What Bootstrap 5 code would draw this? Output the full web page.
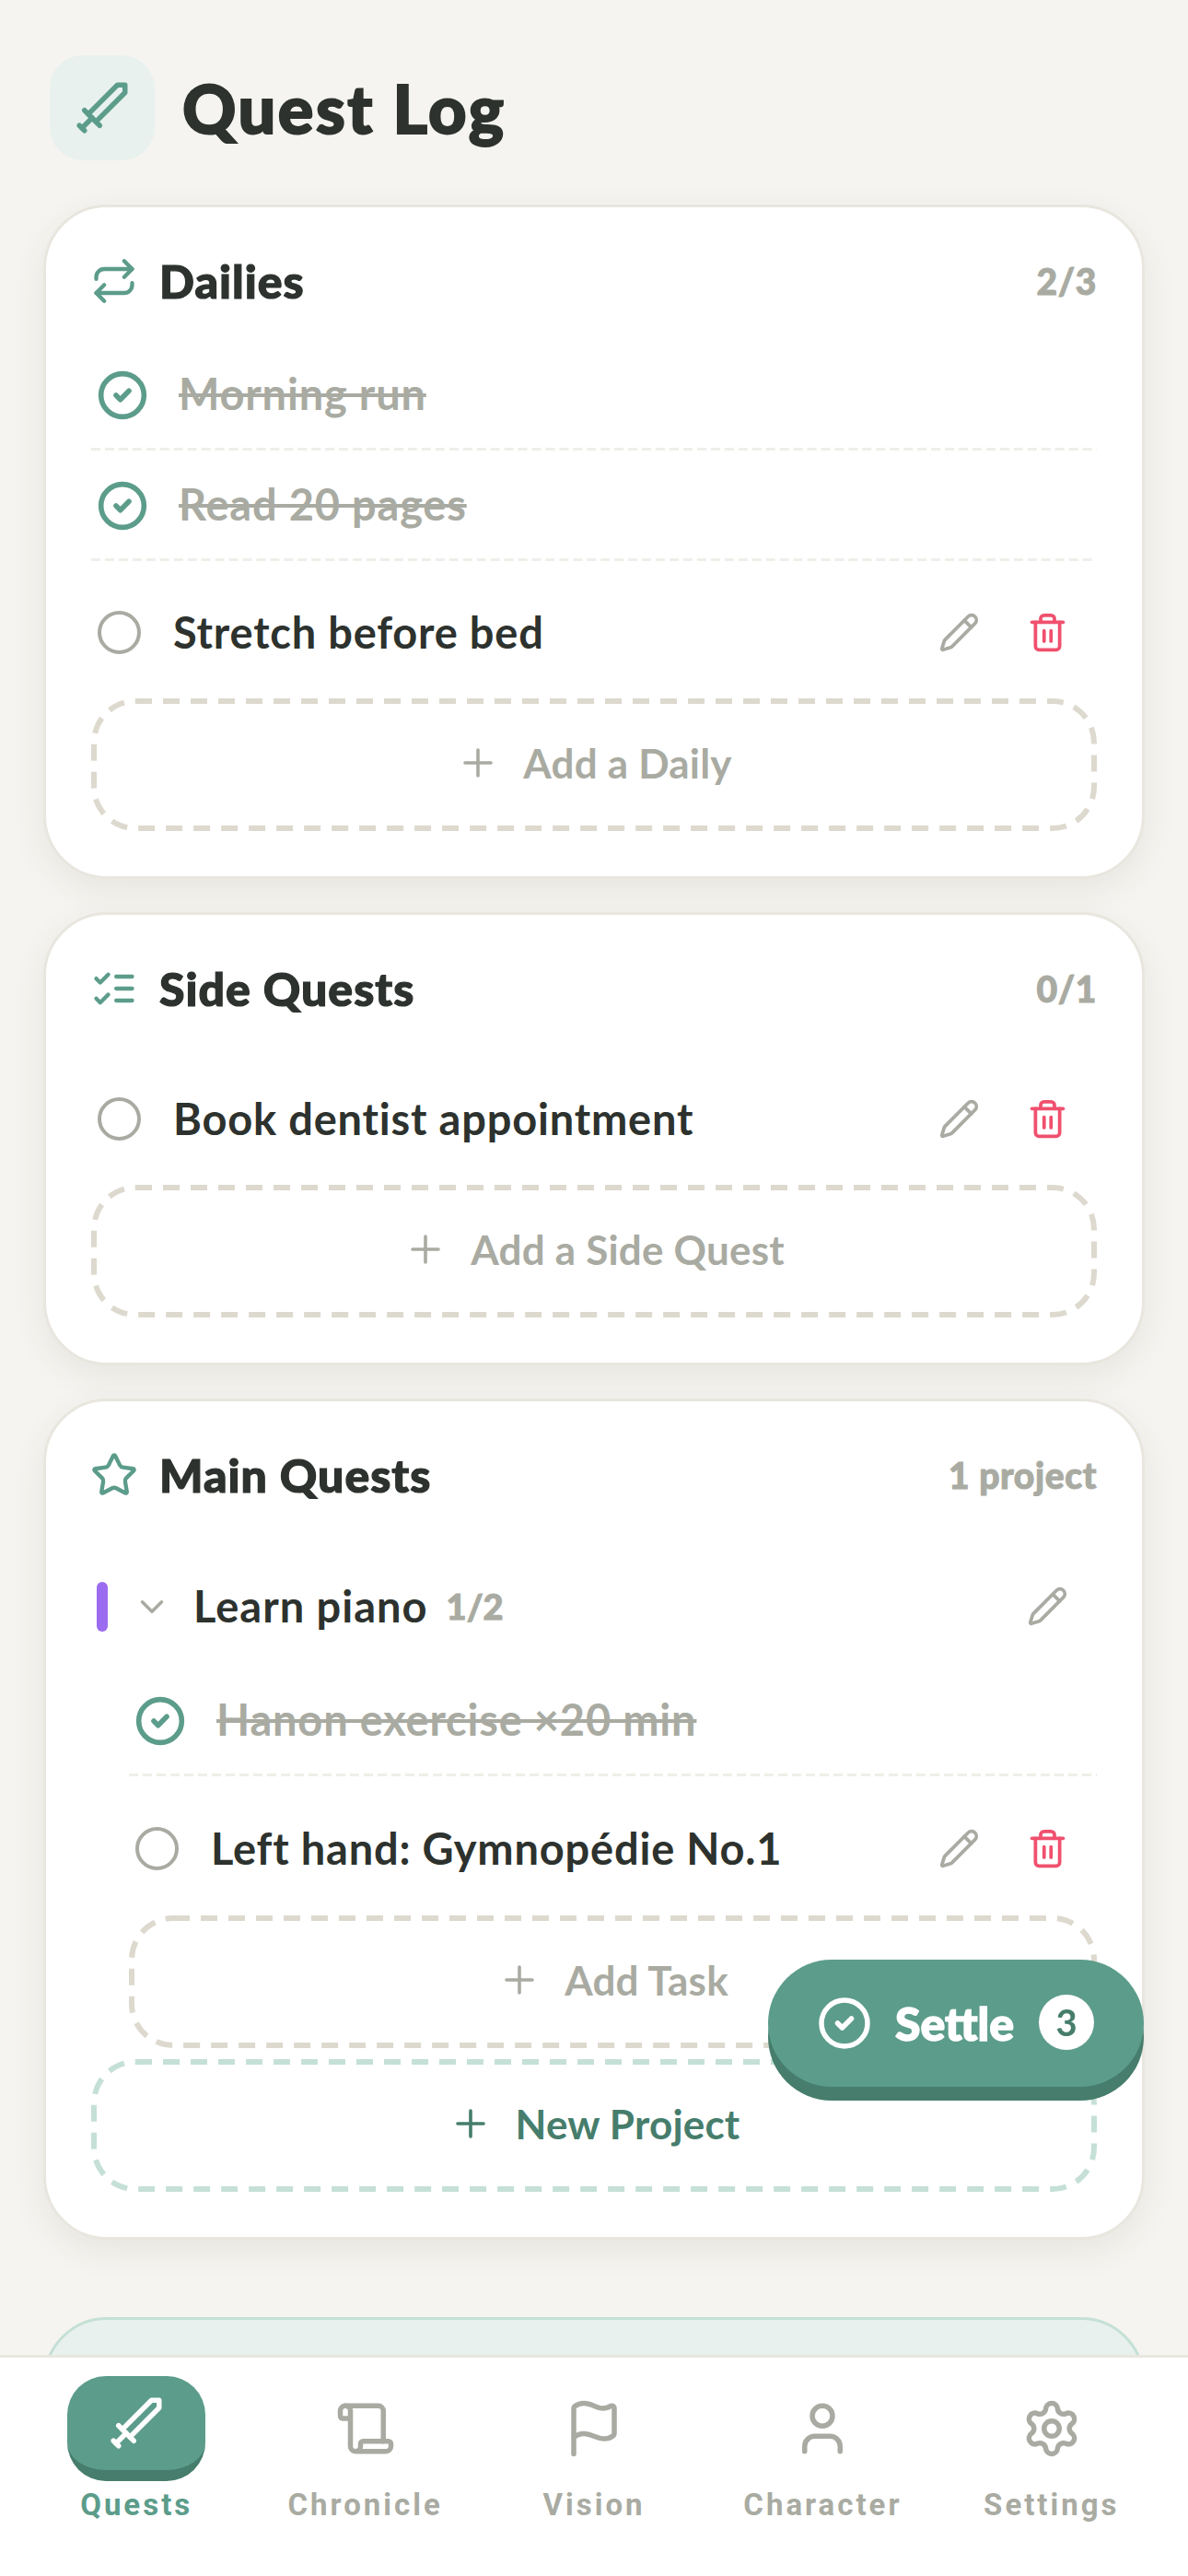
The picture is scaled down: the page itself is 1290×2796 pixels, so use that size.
<!DOCTYPE html>
<html lang="en">
<head>
  <meta charset="UTF-8" />
  <meta name="viewport" content="width=device-width, initial-scale=1.0"/>
  <title>Quest Log</title>
  <link href="https://cdn.jsdelivr.net/npm/bootstrap@5.3.0/dist/css/bootstrap.min.css" rel="stylesheet">
  <style>
    body {
      background-color: #f5f4f0;
      color: #2d322e;
      font-family: 'Lato', 'Noto Sans', sans-serif;
    }

    svg {
      fill: none;
      stroke: currentColor;
      stroke-width: 2;
      stroke-linecap: round;
      stroke-linejoin: round;
      flex-shrink: 0;
    }

    .app-page {
      height: 2796px;
      overflow: hidden;
      padding: 60px 47px 0;
    }

    /* header */
    .title-icon {
      width: 114px;
      height: 114px;
      border-radius: 36px;
      background-color: #e8f1ee;
      color: #5c9c8a;
      margin-left: 7px;
    }
    .title-icon svg { width: 66px; height: 66px; }
    .page-title {
      font-size: 72px;
      font-weight: 900;
      letter-spacing: 2.5px;
      -webkit-text-stroke: 2px #2d322e;
      margin: 0 0 0 30px;
      line-height: 1;
    }

    /* cards */
    .quest-card {
      background-color: #fff;
      border: 3px solid #e8e6de;
      border-radius: 69px;
      box-shadow: 0 12px 36px rgba(70, 70, 50, 0.08);
      padding: 48px 49px 49px;
      margin-top: 36px;
    }
    .quest-card.first-card { margin-top: 48px; }
    .quest-card.tip-card {
      margin-top: 84px;
      height: 400px;
      background-color: #e8f1ee;
      border-color: #c5e0d6;
      box-shadow: none;
    }

    .card-head {
      height: 64px;
      margin-bottom: 32px;
    }
    .head-icon { width: 52px; height: 52px; color: #5c9c8a; margin-left: -1px; }
    .head-title {
      font-size: 50px;
      font-weight: 900;
      letter-spacing: 1px;
      -webkit-text-stroke: 1.2px #2d322e;
      margin: 0 0 0 23px;
      line-height: 1;
    }
    .head-count {
      font-size: 39px;
      font-weight: 900;
      letter-spacing: .6px;
      color: #a9aba2;
      -webkit-text-stroke: 1px #a9aba2;
    }

    /* rows */
    .row-done {
      height: 120px;
      padding-left: 6px;
      background-image: linear-gradient(90deg, #efeee8 10px, transparent 10px);
      background-size: 15px 3px;
      background-repeat: round no-repeat;
      background-position: left bottom;
    }
    .row-done .check-icon { width: 56px; height: 56px; stroke-width: 2.4; color: #5c9c8a; }
    .row-done span {
      margin-left: 33px;
      padding-bottom: 3px;
      font-size: 47px;
      font-weight: 700;
      letter-spacing: .8px;
      color: #a9aba2;
      text-decoration: line-through;
    }
    .row-open {
      height: 149px;
      padding: 5px 0 0 7px;
    }
    .project-tasks .row-open { height: 151px; }
    .open-dot {
      width: 47px;
      height: 47px;
      border: 4.5px solid #a9aba2;
      border-radius: 50%;
      flex-shrink: 0;
    }
    .row-open .row-text {
      margin-left: 35px;
      font-size: 47px;
      font-weight: 700;
      letter-spacing: .8px;
    }
    .row-actions { padding-right: 31px; gap: 51px; }
    .row-actions svg { width: 45px; height: 45px; }
    .edit-icon { color: #a9aba2; }
    .trash-icon { color: #f0506e; }

    /* add buttons, dashed outline is drawn as svg so the dash length can match */
    .add-btn.btn {
      height: 144px;
      border: 0;
      border-radius: 48px;
      color: #a9aba2;
      font-size: 44px;
      font-weight: 700;
      letter-spacing: .2px;
      gap: 25px;
      padding: 0 0 4px;
    }
    .add-btn > svg { width: 48px; height: 48px; stroke-width: 1.8; }
    .add-btn .add-outline {
      width: 100%;
      height: 100%;
      stroke: #ddd9ce;
      stroke-width: 6;
      stroke-linecap: butt;
      stroke-dasharray: 18 12;
    }
    .add-outline rect { width: calc(100% - 6px); height: calc(100% - 6px); }
    .add-btn.add-green {
      color: #467d6c;
      margin-top: 12px;
    }
    .add-btn.add-green .add-outline { stroke: #c5e0d6; }

    /* project */
    .project-row {
      height: 143px;
      padding-top: 14px;
    }
    .project-bar {
      width: 12px;
      height: 54px;
      border-radius: 6px;
      background-color: #9b6cf0;
      margin: 0 0 0 6px;
    }
    .project-row .chev { width: 42px; height: 42px; color: #a9aba2; margin-left: 27px; }
    .project-name { font-size: 47px; font-weight: 700; letter-spacing: 1px; margin-left: 24px; }
    .project-count {
      font-size: 38px;
      font-weight: 900;
      color: #a9aba2;
      -webkit-text-stroke: 1px #a9aba2;
      margin-left: 20px;
    }
    .project-row .edit-icon { width: 45px; height: 45px; margin-right: 31px; }
    .project-tasks { margin-left: 41px; }

    /* settle button */
    .settle-btn.btn {
      right: 48px;
      bottom: 531px;
      width: 408px;
      height: 138px;
      border: 0;
      border-radius: 69px;
      background-color: #5c9c8a;
      box-shadow: 0 15px 0 #467d6c;
      color: #fff;
      font-size: 50px;
      font-weight: 900;
      z-index: 1040;
    }
    .settle-btn svg { width: 60px; height: 60px; stroke-width: 2.2; margin-left: 53px; }
    .settle-label { margin-left: 25px; -webkit-text-stroke: 1.5px #fff; }
    .settle-count.badge {
      width: 60px;
      height: 60px;
      border-radius: 50%;
      background-color: #fff;
      color: #467d6c;
      font-size: 40px;
      font-weight: 700;
      padding: 0;
      margin-left: 27px;
    }

    /* bottom tabs */
    .tab-bar {
      height: 240px;
      background-color: #fff;
      border-top: 3px solid #e8e6de;
      padding: 20px 24px 0;
    }
    .tab-item {
      flex: 1 1 0;
      color: #a9aba2;
      text-decoration: none;
      font-family: 'Roboto', sans-serif;
      font-weight: 700;
      font-size: 33px;
      letter-spacing: 3px;
      line-height: 42px;
    }
    .tab-icon {
      height: 114px;
      margin-bottom: 5px;
    }
    .tab-icon svg { width: 66px; height: 66px; }
    .tab-item.active { color: #5c9c8a; }
    .tab-item.active .tab-icon {
      width: 150px;
      background-color: #5c9c8a;
      border-bottom: 12px solid #467d6c;
      border-radius: 42px;
      color: #fff;
    }
  </style>
</head>
<body>

  <svg width="0" height="0" class="position-absolute">
    <defs>
      <symbol id="i-sword" viewBox="0 0 24 24"><g transform="matrix(-1 0 0 1 24 0)"><polyline points="14.5 17.5 3 6 3 3 6 3 17.5 14.5"/><line x1="13" y1="19" x2="19" y2="13"/><line x1="16" y1="16" x2="20" y2="20"/><line x1="19" y1="21" x2="21" y2="19"/></g></symbol>
      <symbol id="i-repeat" viewBox="0 0 24 24"><path d="m17 2 4 4-4 4"/><path d="M3 11v-1a4 4 0 0 1 4-4h14"/><path d="m7 22-4-4 4-4"/><path d="M21 13v1a4 4 0 0 1-4 4H3"/></symbol>
      <symbol id="i-list" viewBox="0 0 24 24"><path d="m3 17 2 2 4-4"/><path d="m3 7 2 2 4-4"/><path d="M13 6h8"/><path d="M13 12h8"/><path d="M13 18h8"/></symbol>
      <symbol id="i-star" viewBox="0 0 24 24"><path d="M11.525 2.295a.53.53 0 0 1 .95 0l2.31 4.679a2.123 2.123 0 0 0 1.595 1.16l5.166.756a.53.53 0 0 1 .294.904l-3.736 3.638a2.123 2.123 0 0 0-.611 1.878l.882 5.14a.53.53 0 0 1-.771.56l-4.618-2.428a2.122 2.122 0 0 0-1.973 0L6.396 21.01a.53.53 0 0 1-.77-.56l.881-5.139a2.122 2.122 0 0 0-.611-1.879L2.16 9.795a.53.53 0 0 1 .294-.906l5.165-.755a2.122 2.122 0 0 0 1.597-1.16z"/></symbol>
      <symbol id="i-check" viewBox="0 0 24 24"><circle cx="12" cy="12" r="10"/><path d="m9 12 2 2 4-4"/></symbol>
      <symbol id="i-pencil" viewBox="0 0 24 24"><path d="M21.174 6.812a1 1 0 0 0-3.986-3.987L3.842 16.174a2 2 0 0 0-.5.83l-1.321 4.352a.5.5 0 0 0 .623.622l4.353-1.32a2 2 0 0 0 .83-.497z"/><path d="m15 5 4 4"/></symbol>
      <symbol id="i-trash" viewBox="0 0 24 24"><path d="M3 6h18"/><path d="M19 6v14c0 1-1 2-2 2H7c-1 0-2-1-2-2V6"/><path d="M8 6V4c0-1 1-2 2-2h4c1 0 2 1 2 2v2"/><line x1="10" y1="11" x2="10" y2="17"/><line x1="14" y1="11" x2="14" y2="17"/></symbol>
      <symbol id="i-plus" viewBox="0 0 24 24"><path d="M5 12h14"/><path d="M12 5v14"/></symbol>
      <symbol id="i-chevron" viewBox="0 0 24 24"><path d="m6 9 6 6 6-6"/></symbol>
      <symbol id="i-scroll" viewBox="0 0 24 24"><path d="M19 17V5a2 2 0 0 0-2-2H4"/><path d="M8 21h12a2 2 0 0 0 2-2v-1a1 1 0 0 0-1-1H11a1 1 0 0 0-1 1v1a2 2 0 1 1-4 0V5a2 2 0 1 0-4 0v2a1 1 0 0 0 1 1h3"/></symbol>
      <symbol id="i-flag" viewBox="0 0 24 24"><path d="M4 22V4a1 1 0 0 1 .4-.8A6 6 0 0 1 8 2c3 0 5 2 7.333 2q2 0 3.067-.8A1 1 0 0 1 20 4v10a1 1 0 0 1-.4.8A6 6 0 0 1 16 16c-3 0-5-2-8-2a6 6 0 0 0-4 1.528"/></symbol>
      <symbol id="i-user" viewBox="0 0 24 24"><path d="M19 21v-2a4 4 0 0 0-4-4H9a4 4 0 0 0-4 4v2"/><circle cx="12" cy="7" r="4"/></symbol>
      <symbol id="i-gear" viewBox="0 0 24 24"><path d="M9.671 4.136a2.34 2.34 0 0 1 4.659 0 2.34 2.34 0 0 0 3.319 1.915 2.34 2.34 0 0 1 2.33 4.033 2.34 2.34 0 0 0 0 3.831 2.34 2.34 0 0 1-2.33 4.033 2.34 2.34 0 0 0-3.319 1.915 2.34 2.34 0 0 1-4.659 0 2.34 2.34 0 0 0-3.32-1.915 2.34 2.34 0 0 1-2.33-4.033 2.34 2.34 0 0 0 0-3.831A2.34 2.34 0 0 1 6.35 6.051a2.34 2.34 0 0 0 3.319-1.915"/><circle cx="12" cy="12" r="3"/></symbol>
    </defs>
  </svg>

  <div class="app-page">

    <!-- Header -->
    <div class="d-flex align-items-center">
      <div class="title-icon d-flex align-items-center justify-content-center">
        <svg><use href="#i-sword"/></svg>
      </div>
      <h1 class="page-title">Quest Log</h1>
    </div>

    <!-- Dailies -->
    <section class="quest-card first-card">
      <div class="card-head d-flex align-items-center">
        <svg class="head-icon"><use href="#i-repeat"/></svg>
        <h2 class="head-title flex-grow-1">Dailies</h2>
        <span class="head-count">2/3</span>
      </div>
      <div class="row-done d-flex align-items-center">
        <svg class="check-icon"><use href="#i-check"/></svg><span>Morning run</span>
      </div>
      <div class="row-done d-flex align-items-center">
        <svg class="check-icon"><use href="#i-check"/></svg><span>Read 20 pages</span>
      </div>
      <div class="row-open d-flex align-items-center">
        <div class="open-dot"></div>
        <span class="row-text flex-grow-1">Stretch before bed</span>
        <div class="row-actions d-flex">
          <svg class="edit-icon"><use href="#i-pencil"/></svg>
          <svg class="trash-icon"><use href="#i-trash"/></svg>
        </div>
      </div>
      <button type="button" class="btn add-btn w-100 position-relative d-flex align-items-center justify-content-center">
        <svg class="add-outline position-absolute top-0 start-0"><rect x="3" y="3" rx="45"/></svg>
        <svg><use href="#i-plus"/></svg>Add a Daily
      </button>
    </section>

    <!-- Side Quests -->
    <section class="quest-card">
      <div class="card-head d-flex align-items-center">
        <svg class="head-icon"><use href="#i-list"/></svg>
        <h2 class="head-title flex-grow-1">Side Quests</h2>
        <span class="head-count">0/1</span>
      </div>
      <div class="row-open d-flex align-items-center">
        <div class="open-dot"></div>
        <span class="row-text flex-grow-1">Book dentist appointment</span>
        <div class="row-actions d-flex">
          <svg class="edit-icon"><use href="#i-pencil"/></svg>
          <svg class="trash-icon"><use href="#i-trash"/></svg>
        </div>
      </div>
      <button type="button" class="btn add-btn w-100 position-relative d-flex align-items-center justify-content-center">
        <svg class="add-outline position-absolute top-0 start-0"><rect x="3" y="3" rx="45"/></svg>
        <svg><use href="#i-plus"/></svg>Add a Side Quest
      </button>
    </section>

    <!-- Main Quests -->
    <section class="quest-card">
      <div class="card-head d-flex align-items-center">
        <svg class="head-icon"><use href="#i-star"/></svg>
        <h2 class="head-title flex-grow-1">Main Quests</h2>
        <span class="head-count">1 project</span>
      </div>
      <div class="project-row d-flex align-items-center">
        <div class="project-bar"></div>
        <svg class="chev"><use href="#i-chevron"/></svg>
        <span class="project-name">Learn piano</span>
        <span class="project-count flex-grow-1">1/2</span>
        <svg class="edit-icon"><use href="#i-pencil"/></svg>
      </div>
      <div class="project-tasks">
        <div class="row-done d-flex align-items-center">
          <svg class="check-icon"><use href="#i-check"/></svg><span>Hanon exercise ×20 min</span>
        </div>
        <div class="row-open d-flex align-items-center">
          <div class="open-dot"></div>
          <span class="row-text flex-grow-1">Left hand: Gymnopédie No.1</span>
          <div class="row-actions d-flex">
            <svg class="edit-icon"><use href="#i-pencil"/></svg>
            <svg class="trash-icon"><use href="#i-trash"/></svg>
          </div>
        </div>
        <button type="button" class="btn add-btn w-100 position-relative d-flex align-items-center justify-content-center">
          <svg class="add-outline position-absolute top-0 start-0"><rect x="3" y="3" rx="45"/></svg>
          <svg><use href="#i-plus"/></svg>Add Task
        </button>
      </div>
      <button type="button" class="btn add-btn add-green w-100 position-relative d-flex align-items-center justify-content-center">
        <svg class="add-outline position-absolute top-0 start-0"><rect x="3" y="3" rx="45"/></svg>
        <svg><use href="#i-plus"/></svg>New Project
      </button>
    </section>

    <div class="quest-card tip-card"></div>
  </div>

  <!-- Settle -->
  <button type="button" class="btn settle-btn position-fixed d-flex align-items-center p-0">
    <svg><use href="#i-check"/></svg>
    <span class="settle-label">Settle</span>
    <span class="badge settle-count d-flex align-items-center justify-content-center">3</span>
  </button>

  <!-- Bottom tabs -->
  <nav class="tab-bar fixed-bottom d-flex align-items-start">
    <a href="#" class="tab-item active d-flex flex-column align-items-center">
      <div class="tab-icon d-flex align-items-center justify-content-center"><svg><use href="#i-sword"/></svg></div>
      Quests
    </a>
    <a href="#" class="tab-item d-flex flex-column align-items-center">
      <div class="tab-icon d-flex align-items-center justify-content-center"><svg><use href="#i-scroll"/></svg></div>
      Chronicle
    </a>
    <a href="#" class="tab-item d-flex flex-column align-items-center">
      <div class="tab-icon d-flex align-items-center justify-content-center"><svg><use href="#i-flag"/></svg></div>
      Vision
    </a>
    <a href="#" class="tab-item d-flex flex-column align-items-center">
      <div class="tab-icon d-flex align-items-center justify-content-center"><svg><use href="#i-user"/></svg></div>
      Character
    </a>
    <a href="#" class="tab-item d-flex flex-column align-items-center">
      <div class="tab-icon d-flex align-items-center justify-content-center"><svg><use href="#i-gear"/></svg></div>
      Settings
    </a>
  </nav>

  <script src="https://cdn.jsdelivr.net/npm/bootstrap@5.3.0/dist/js/bootstrap.bundle.min.js"></script>
</body>
</html>
